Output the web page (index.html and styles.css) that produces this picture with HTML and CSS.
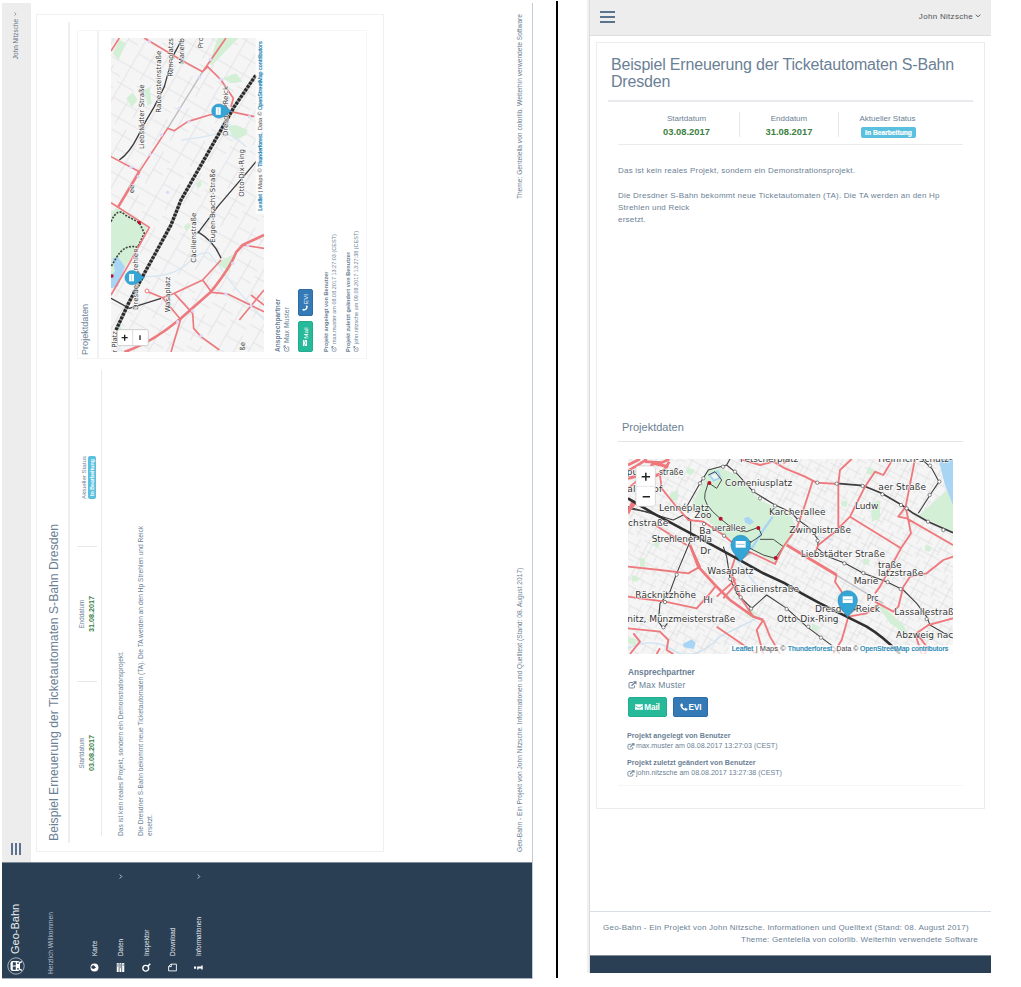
FILE: index.html
```html
<!DOCTYPE html>
<html lang="de">
<head>
<meta charset="utf-8">
<title>Geo-Bahn</title>
<link rel="stylesheet" href="styles.css">
</head>
<body>
<svg class="defs" width="0" height="0">
  <defs>
    <pattern id="streets" width="96" height="84" patternUnits="userSpaceOnUse" patternTransform="rotate(28)">
      <path d="M0 10H96M0 37H60M22 62H96M60 24H96M14 0V84M42 10V62M71 0V37M84 37V84M55 62V84M28 37V84M0 74H28" fill="none" stroke="#d6d6d6" stroke-width="1.6"/>
    </pattern>
    <pattern id="streets2" width="150" height="130" patternUnits="userSpaceOnUse" patternTransform="rotate(30)">
      <path d="M0 14H150M0 58H90M40 96H150M20 0V130M66 14V96M112 0V58M130 58V130M88 96V130" fill="none" stroke="#dfdfe1" stroke-width="2.2"/>
    </pattern>
    <symbol id="pin" viewBox="0 0 60 82" overflow="visible">
      <path d="M30 78L62 52L44 48Z" fill="#000" opacity=".3"/>
      <path d="M30 80C24 66 1 52 1 29A29 29 0 0 1 59 29C59 52 36 66 30 80Z" fill="#35a5d6" stroke="#2489bb" stroke-width="2"/>
      <path d="M15 17H45V37H15Z" fill="#fff"/><path d="M18 27H42" stroke="#8ccbe8" stroke-width="3"/>
    </symbol>
    <symbol id="edit" viewBox="0 0 18 16">
      <path d="M10 3H4Q2 3 2 5V12Q2 14 4 14H11Q13 14 13 12V9" fill="none" stroke="currentColor" stroke-width="1.9"/>
      <path d="M7 9.500L14 3" fill="none" stroke="currentColor" stroke-width="2.4"/><path d="M10 .5H17V7.500Z" fill="currentColor"/>
    </symbol>
    <symbol id="mail" viewBox="0 0 16 13">
      <path d="M0 1H16V3L8 8L0 3ZM0 4.6L8 9.6L16 4.6V12H0Z" fill="currentColor"/>
    </symbol>
    <symbol id="phone" viewBox="0 0 14 14">
      <path d="M3.5 .5L5.5 4.5L4 6Q5.5 9 8 10L9.7 8.5L13.5 10.5Q13 13.5 10.5 13.5Q2 12.5 .5 4Q.5 1.5 3.5 .5Z" fill="currentColor"/>
    </symbol>
    <symbol id="down" viewBox="0 0 10 7">
      <path d="M1 1L5 5L9 1" fill="none" stroke="currentColor" stroke-width="1.6"/>
    </symbol>
  </defs>
</svg>

<div class="desktop-frame">
<div class="desktop">
  <aside class="sidebar">
    <div class="brand">
      <svg class="logo" viewBox="0 0 18 18"><circle cx="9" cy="9" r="8.2" fill="none" stroke="#c6ced6" stroke-width=".8"/><rect x="4" y="3.500" width="10" height="9.500" rx="2.200" fill="#fff"/><path d="M5.800 12.500L4.600 15M12.200 12.500L13.400 15" stroke="#fff" stroke-width="1.300"/><path d="M5.300 5.800H8.400V8.800H5.300ZM9.600 5.800H12.700V8.800H9.600Z" fill="#2a3f54"/><circle cx="6.200" cy="11" r=".9" fill="#2a3f54"/><circle cx="11.800" cy="11" r=".9" fill="#2a3f54"/></svg>
      <span>Geo-Bahn</span>
    </div>
    <p class="welcome">Herzlich Willkommen</p>
    <nav class="menu">
      <a><svg viewBox="0 0 12 12"><circle cx="6" cy="6" r="5.3" fill="#fff"/><path d="M5 2Q9 1 9 5L6 8L4 5Z" fill="#2a3f54"/></svg><span>Karte</span></a>
      <a><svg viewBox="0 0 12 12"><path d="M0 1H12V3.6H0ZM0 4.6H12V7.2H0ZM0 8.2H12V11H0Z" fill="#fff"/><path d="M7 2.3H11M5 5.9H11M8 9.6H11" stroke="#7b8996"/></svg><span>Daten</span><svg class="chev"><use href="#down"/></svg></a>
      <a><svg viewBox="0 0 12 12"><circle cx="5" cy="5" r="3.9" fill="none" stroke="#fff" stroke-width="1.8"/><path d="M8 8L11 11" stroke="#fff" stroke-width="2.2"/></svg><span>Inspektor</span></a>
      <a><svg viewBox="0 0 12 12"><path d="M1.5 .8H7.5L10.5 4V11.2H1.5ZM7.2 1V4.4H10.5" fill="none" stroke="#fff" stroke-width="1.2"/></svg><span>Download</span></a>
      <a><svg viewBox="0 0 12 12"><path d="M4.5 0H7.5V2.8H4.5ZM3.5 4.2H7.5V9.7H8.7V11.6H3.3V9.7H4.6V6H3.5Z" fill="#fff"/></svg><span>Informationen</span><svg class="chev"><use href="#down"/></svg></a>
    </nav>
  </aside>
  <main class="main">
    <header class="topbar"><div class="burger"><i></i><i></i><i></i></div><div class="user">John Nitzsche <svg><use href="#down"/></svg></div></header>
    <section class="card">
      <h1>Beispiel Erneuerung der Ticketautomaten S-Bahn Dresden</h1>
      <div class="columns">
        <div class="left">
          <div class="stats">
            <div><span>Startdatum</span><b>03.08.2017</b></div>
            <div><span>Enddatum</span><b>31.08.2017</b></div>
            <div><span>Aktueller Status</span><em>In Bearbeitung</em></div>
          </div>
          <p class="desc">Das ist kein reales Projekt, sondern ein Demonstrationsprojekt.<br><br>Die Dresdner S-Bahn bekommt neue Ticketautomaten (TA). Die TA werden an den Hp Strehlen und Reick<br>ersetzt.</p>
        </div>
        <div class="panel">
          <h2>Projektdaten</h2>
          <svg class="map" viewBox="0 0 942 459">
            <rect width="942" height="459" fill="#f5f5f6"/><rect width="942" height="459" fill="url(#streets2)"/>
            <g transform="translate(1056 -330) rotate(90)" fill="none" stroke-linejoin="round">
              <g fill="#d3efd5">
                <path d="M330 635L350 625L440 680L400 760L330 865Z"/><path d="M645 790L703 760L685 815Z"/><path d="M625 190L650 114H712L632 197Z"/>
                <path d="M335 160L355 120L375 130L352 180ZM376 295L395 277L410 300L392 322ZM430 270L445 262L452 310L440 318ZM665 235L705 220L725 245L690 250ZM680 380L705 375L740 390L735 405L700 420ZM585 550L598 540L602 555L590 567ZM548 680L562 668L570 680L556 692ZM345 975L358 970L362 988L350 992Z"/>
              </g>
              <path d="M335 775L350 770L372 800L350 860L330 865V825L342 815Z" fill="#a9d5f4"/>
              <path d="M540 420Q620 410 650 400T735 440M430 830Q520 830 560 790T625 760L700 860L789 960" stroke="#d8e7f2" stroke-width="4"/>
              <path d="M500 385L605 215" stroke="#bdbdc0" stroke-width="4"/>
              <g stroke="#3c3c3c" stroke-width="4"><path d="M330 895L385 925L480 895M590 695Q640 725 660 775M590 700L650 620L740 515L765 485M355 480Q385 460 410 410T460 320L490 260L515 170L545 114"/></g>
              <path d="M330 665Q350 620 372 645L415 668L430 700L410 742Q370 730 345 775L330 800" stroke="#444" stroke-width="5" stroke-dasharray="6 4"/>
              <g stroke="#ec7a7e" stroke-width="5">
                <path d="M330 608L445 682L385 790L330 885M415 515L500 385L520 392L560 365L625 345L690 335L760 350M605 215L675 114M330 470L415 515M690 320L697 295L660 240L620 200L605 215L540 180L430 114M330 153L355 114"/>
                <path d="M725 735L789 745M510 1056L540 955M440 875L485 893L520 880L605 840L660 780M520 880L575 940L578 985L600 1010L655 1050M485 893L540 960M605 840L632 877L680 882L789 935M715 960L789 870M750 885L789 915"/>
              </g>
              <path d="M352 620L415 515M370 1056Q450 1030 540 955L630 875Q690 800 705 757L725 735L789 705" stroke="#ec7a7e" stroke-width="8"/>
              <path d="M345 990L385 905L430 820L510 675L540 600L620 460L700 320L765 225" stroke="#999" stroke-width="10"/>
              <path d="M345 990L385 905L430 820L510 675L540 600L620 460L700 320L765 225" stroke="#292929" stroke-width="10" stroke-dasharray="8 4"/>
              <circle cx="438" cy="873" r="6" fill="#fff" stroke="#ec7a7e" stroke-width="3"/>
              <g fill="#dcd8fa"><circle cx="390" cy="502" r="5"/><circle cx="412" cy="530" r="5"/><circle cx="447" cy="463" r="5"/><circle cx="482" cy="405" r="5"/><circle cx="535" cy="325" r="5"/><circle cx="595" cy="232" r="5"/><circle cx="628" cy="178" r="5"/><circle cx="540" cy="180" r="5"/><circle cx="445" cy="125" r="5"/><circle cx="564" cy="365" r="5"/><circle cx="660" cy="238" r="5"/><circle cx="745" cy="350" r="5"/><circle cx="500" cy="577" r="5"/><circle cx="530" cy="965" r="5"/><circle cx="575" cy="933" r="5"/><circle cx="695" cy="790" r="5"/><circle cx="740" cy="737" r="5"/><circle cx="675" cy="882" r="5"/><circle cx="750" cy="917" r="5"/><circle cx="600" cy="1007" r="5"/></g>
              <g fill="#b9122f"><circle cx="415" cy="668" r="5"/><circle cx="333" cy="828" r="5"/></g>
            </g>
            <g class="labels" font-size="21">
              <text x="609" y="100" textLength="194">Liebstädter Straße</text><text x="718" y="149" textLength="186">Rauensteinstraße</text>
              <text x="826" y="186" textLength="116">Rennplatzs</text><text x="864" y="219" textLength="78">Marienb</text><text x="911" y="277" textLength="34">Pro</text>
              <text x="476" y="70">ee</text><text x="648" y="350" textLength="150">Dresden-Reick</text><text x="126" y="82" textLength="185">Dresden-Strehlen</text>
              <text x="119" y="176" textLength="107">Wasaplatz</text><text x="268" y="256" textLength="150">Cäcilienstraße</text><text x="328" y="311" textLength="221">Eugen-Bracht-Straße</text>
              <text x="466" y="398" textLength="143">Otto-Dix-Ring</text><text x="-2" y="17" textLength="65">r Platz</text><text x="4" y="401">ße</text>
            </g>
            <use href="#pin" x="201" y="41" width="44" height="62"/><use href="#pin" x="701" y="301" width="44" height="62"/>
            <rect x="415" y="434" width="527" height="25" fill="#fff" opacity=".75"/>
            <g class="attr" font-size="14"><text x="424" y="452" textLength="49" lengthAdjust="spacingAndGlyphs" class="lk">Leaflet</text><text x="479" y="452" textLength="72" lengthAdjust="spacingAndGlyphs">| Maps ©</text><text x="556" y="452" textLength="98" lengthAdjust="spacingAndGlyphs" class="lk">Thunderforest</text><text x="655" y="452" textLength="66" lengthAdjust="spacingAndGlyphs">, Data ©</text><text x="726" y="452" textLength="206" lengthAdjust="spacingAndGlyphs" class="lk">OpenStreetMap contributors</text></g>
            <rect x="19" y="19" width="48" height="93" rx="5" fill="#fff" stroke="#bbb" stroke-width="2"/><path d="M20 65H66" stroke="#ccc" stroke-width="2"/><path d="M34 41H52M43 32V50M36 87H50" stroke="#222" stroke-width="4"/>
          </svg>
          <div class="contact"><b>Ansprechpartner</b><span><svg><use href="#edit"/></svg>Max Muster</span></div>
          <div class="buttons"><a class="green"><svg><use href="#mail"/></svg>Mail</a><a class="blue"><svg><use href="#phone"/></svg>EVI</a></div>
          <div class="log"><b>Projekt angelegt von Benutzer</b><span><svg><use href="#edit"/></svg>max.muster am 08.08.2017 13:27:03 (CEST)</span></div>
          <div class="log"><b>Projekt zuletzt geändert von Benutzer</b><span><svg><use href="#edit"/></svg>john.nitzsche am 09.08.2017 13:27:38 (CEST)</span></div>
        </div>
      </div>
    </section>
    <footer><span>Geo-Bahn - Ein Projekt von John Nitzsche. Informationen und Quelltext (Stand: 08. August 2017)</span><span>Theme: Gentelella von colorlib. Weiterhin verwendete Software</span></footer>
  </main>
</div>
</div>

<div class="separator"></div>

<div class="phone">
  <header class="topbar"><div class="burger"><i></i><i></i><i></i></div><div class="user">John Nitzsche <svg><use href="#down"/></svg></div></header>
  <section class="card">
    <h1>Beispiel Erneuerung der Ticketautomaten S-Bahn Dresden</h1>
    <div class="left">
      <div class="stats">
        <div><span>Startdatum</span><b>03.08.2017</b></div>
        <div><span>Enddatum</span><b>31.08.2017</b></div>
        <div><span>Aktueller Status</span><em>In Bearbeitung</em></div>
      </div>
      <p class="desc">Das ist kein reales Projekt, sondern ein Demonstrationsprojekt.<br><br>Die Dresdner S-Bahn bekommt neue Ticketautomaten (TA). Die TA werden an den Hp<br>Strehlen und Reick<br>ersetzt.</p>
    </div>
    <div class="panel">
      <h2>Projektdaten</h2>
      <svg class="map" viewBox="24 27 975 585">
        <rect x="24" y="27" width="975" height="585" fill="#f5f5f6"/><rect x="24" y="27" width="975" height="585" fill="url(#streets)"/>
        <g fill="#d3efd5">
          <path d="M262 60L300 55L345 72L415 148L505 190L533 235L500 285L465 338L310 255L215 165L250 95Z"/>
          <path d="M892 200L999 105V245L905 200Z"/><path d="M765 455L790 470L850 525L870 560L810 520Z"/><path d="M372 485L395 475L415 505L385 502Z"/>
          <path d="M755 160L780 150V205L755 215ZM665 155L682 150L680 172L665 168ZM60 325H75V350H60ZM35 375L60 385L50 395L35 390ZM150 130L175 120L172 150L150 155ZM730 325L750 330L745 345L728 342ZM105 270L120 280L115 295L100 285ZM24 560L50 568L45 585L24 580ZM200 52L225 60L215 75L200 70ZM575 520L600 530L590 545L575 538ZM915 285L935 290L930 305L915 302ZM745 50L765 60L755 75L740 70Z"/>
        </g>
        <g fill="#a9d5f4"><path d="M955 27H999V165L975 105Z"/><path d="M265 75L295 60L305 85L280 95Z"/><path d="M372 205L385 200L402 215L390 225L375 217Z"/><path d="M188 582L215 568L227 578L222 597L192 592Z"/></g>
        <path d="M272 76L292 68L298 82L282 88Z" fill="#eef6ee"/>
        <path d="M458 200L430 240L395 295L375 290" stroke="#a9d5f4" stroke-width="7" fill="none"/>
        <g fill="none" stroke="#cfe2f0" stroke-width="4"><path d="M24 595Q100 560 160 600T300 560L420 500M350 330L420 420M590 260L640 270"/></g>
        <path d="M640 370L790 460" stroke="#c4c4c6" stroke-width="4" fill="none"/>
        <g fill="none" stroke="#3d3d3d" stroke-width="3.2" stroke-linejoin="round">
          <path d="M24 170L75 185L160 210L190 195L212 210V270L170 370L150 425L120 460L115 515L130 535L142 520M200 170L240 100L265 60L320 45L330 27M320 45L350 70L400 125L465 165L510 185L535 210L570 235L595 270L592 295L625 320L675 340L730 370L800 395L850 420L890 460L920 500L930 525L999 565"/>
          <path d="M650 100L730 107L785 130L845 165L880 190L925 215L999 248" stroke-width="5"/>
          <path d="M905 27L935 55L957 95L930 135L895 190M330 385L350 430L395 475L440 435L500 475L560 530L640 590L660 612M310 290L320 320L330 385M24 175L105 190"/>
          <path d="M265 98L255 130Q245 160 300 205Q350 250 380 245L415 232L425 255L395 275L360 270M395 275L380 290L430 315L465 325L490 290L460 268H420M265 98L290 115L305 90L285 65L265 75" stroke-width="2.8"/>
        </g>
        <g fill="none" stroke="#ee787c" stroke-width="5.500" stroke-linejoin="round">
          <path d="M24 115L60 85L120 72M120 75L125 115L165 165L205 210L250 215L310 255L345 285L465 342L490 290L530 235L555 165L578 92M360 27L420 45L460 35L495 55L555 80L590 98L655 102L660 60L695 27M655 102V235M817 30L790 75L765 65L735 110L690 200L645 245L595 285L580 320M690 200L843 295M885 27L857 170L835 200L860 205L999 285M857 170L873 250L843 295L780 410L765 430"/>
          <path d="M999 320L970 330L920 370L870 380L850 410L835 470L820 485L765 455M650 375L645 395L665 425L675 490L685 500L665 570L640 612M685 500L740 490L775 465M24 440L60 445L135 455L230 475L270 430L290 405M24 350L120 360L205 370L240 350L210 285M350 310L330 370L345 390L290 440M340 385L360 440L400 500M310 445L345 405M430 510L450 560L480 612M430 510L410 540L430 612M24 535L120 545L145 570L140 600L160 612M30 612L60 575L40 550M290 530L410 612M110 612L120 595M490 40L510 27M999 505L925 525L890 550L920 590L915 612M885 550L905 612M105 225L200 285"/>
        </g>
        <path d="M24 62Q65 40 80 27M24 45L60 27M75 35L125 38L148 27M148 35L125 70L75 90M24 185L45 160M210 285L235 350L285 405L330 450L400 500L430 510" fill="none" stroke="#ee787c" stroke-width="8"/>
        <path d="M24 85Q80 75 100 40L145 50M24 190L40 150M500 285L650 375" fill="none" stroke="#ee787c" stroke-width="9"/>
        <path d="M24 145L100 190L240 265L350 325L430 370L495 400L545 430L600 460L680 500L740 530Q790 560 840 612" fill="none" stroke="#303030" stroke-width="8"/>
        <g fill="#fff" stroke="#555" stroke-width="2"><circle cx="240" cy="100" r="5"/><circle cx="250" cy="85" r="5"/><circle cx="309" cy="50" r="5"/><circle cx="345" cy="65" r="5"/><circle cx="400" cy="123" r="5"/><circle cx="420" cy="145" r="5"/><circle cx="465" cy="167" r="5"/><circle cx="535" cy="210" r="5"/><circle cx="593" cy="272" r="5"/><circle cx="673" cy="340" r="5"/><circle cx="730" cy="369" r="5"/><circle cx="803" cy="396" r="5"/><circle cx="842" cy="417" r="5"/><circle cx="592" cy="98" r="5"/><circle cx="650" cy="101" r="5"/><circle cx="728" cy="108" r="5"/><circle cx="787" cy="133" r="5"/><circle cx="843" cy="165" r="5"/><circle cx="860" cy="175" r="5"/><circle cx="924" cy="215" r="5"/><circle cx="970" cy="240" r="5"/><circle cx="958" cy="95" r="5"/><circle cx="929" cy="135" r="5"/><circle cx="930" cy="47" r="5"/><circle cx="170" cy="374" r="5"/><circle cx="135" cy="456" r="5"/><circle cx="130" cy="532" r="5"/><circle cx="331" cy="387" r="5"/><circle cx="362" cy="442" r="5"/><circle cx="393" cy="476" r="5"/><circle cx="500" cy="477" r="5"/><circle cx="565" cy="530" r="5"/><circle cx="603" cy="563" r="5"/><circle cx="252" cy="222" r="5"/><circle cx="312" cy="257" r="5"/><circle cx="920" cy="507" r="5"/></g>
        <g fill="#b9122f"><circle cx="268" cy="99" r="6"/><circle cx="302" cy="206" r="6"/><circle cx="415" cy="234" r="6"/><circle cx="467" cy="324" r="6"/></g>
        <g class="labels" font-size="27">
          <text x="360" y="36" textLength="175">Fetscherplatz</text><text x="775" y="36" textLength="222">Heinrich-Schütz-</text>
          <text x="20" y="75">pu</text><text x="117" y="75" textLength="73" lengthAdjust="spacingAndGlyphs">straße</text><text x="22" y="127">al</text><text x="100" y="127">of</text>
          <text x="315" y="108" textLength="202">Comeniusplatz</text><text x="117" y="182" textLength="151">Lennéplatz</text><text x="223" y="203" textLength="52">Zoo</text>
          <text x="24" y="227" textLength="121">chstraße</text><text x="238" y="252">Ba</text><text x="275" y="242" textLength="103" lengthAdjust="spacingAndGlyphs">uerallee</text><text x="95" y="276" textLength="181">Strehlener-Pla</text><text x="241" y="312">Dr</text>
          <text x="262" y="371" textLength="139">Wasaplatz</text><text x="342" y="425" textLength="195">Cäcilienstraße</text><text x="46" y="444" textLength="182">Räcknitzhöhe</text><text x="250" y="460">Hı</text>
          <text x="22" y="516" textLength="324">nitz, Münzmeisterstraße</text><text x="471" y="517" textLength="185">Otto-Dix-Ring</text><text x="447" y="194" textLength="170">Karcherallee</text><text x="508" y="250" textLength="185">Zwinglistraße</text>
          <text x="775" y="119" textLength="143">aer Straße</text><text x="705" y="176" textLength="70">Ludw</text><text x="542" y="322" textLength="253">Liebstädter Straße</text><text x="774" y="354" textLength="71">traße</text><text x="774" y="378" textLength="136">latzstraße</text>
          <text x="701" y="402" textLength="74">Marie</text><text x="740" y="452" textLength="36" lengthAdjust="spacingAndGlyphs">Prc</text><text x="585" y="485" textLength="195">Dresden-Reick</text><text x="823" y="495" textLength="178">Lassallestraß</text><text x="828" y="563" textLength="172">Abzweig nac</text>
        </g>
        <use href="#pin" x="332" y="256" width="60" height="82"/><use href="#pin" x="653" y="422" width="60" height="82"/>
        <rect x="330" y="585" width="669" height="27" fill="#fff" opacity=".75"/>
        <g class="attr" font-size="20"><text x="335" y="604" textLength="65" lengthAdjust="spacingAndGlyphs" class="lk">Leaflet</text><text x="407" y="604" textLength="90" lengthAdjust="spacingAndGlyphs">| Maps ©</text><text x="503" y="604" textLength="134" lengthAdjust="spacingAndGlyphs" class="lk">Thunderforest</text><text x="638" y="604" textLength="77" lengthAdjust="spacingAndGlyphs">, Data ©</text><text x="720" y="604" textLength="265" lengthAdjust="spacingAndGlyphs" class="lk">OpenStreetMap contributors</text></g>
        <rect x="48" y="48" width="58" height="121" rx="8" fill="#fff" stroke="#ccc" stroke-width="2"/><path d="M49 109H105" stroke="#ddd" stroke-width="2"/><path d="M65 80H90M77.500 68V92M68 140H90" stroke="#222" stroke-width="4.500"/>
      </svg>
      <div class="contact"><b>Ansprechpartner</b><span><svg><use href="#edit"/></svg>Max Muster</span></div>
      <div class="buttons"><a class="green"><svg><use href="#mail"/></svg>Mail</a><a class="blue"><svg><use href="#phone"/></svg>EVI</a></div>
      <div class="log"><b>Projekt angelegt von Benutzer</b><span><svg><use href="#edit"/></svg>max.muster am 08.08.2017 13:27:03 (CEST)</span></div>
      <div class="log"><b>Projekt zuletzt geändert von Benutzer</b><span><svg><use href="#edit"/></svg>john.nitzsche am 08.08.2017 13:27:38 (CEST)</span></div>
    </div>
  </section>
  <footer><span>Geo-Bahn - Ein Projekt von John Nitzsche. Informationen und Quelltext (Stand: 08. August 2017)</span><span>Theme: Gentelella von colorlib. Weiterhin verwendete Software</span></footer>
  <div class="base"></div>
</div>
</body>
</html>
```
FILE: styles.css
```css
* { box-sizing: border-box; }
body {
  margin: 0; width: 1021px; height: 987px; overflow: hidden; background: #fff;
  display: flex; align-items: flex-start; padding-left: 2px;
  font-family: "Liberation Sans", Arial, sans-serif; color: #6b7f95;
}
h1, h2, p { margin: 0; font-weight: 400; }
svg { flex: none; display: block; }
.defs { position: absolute; }
b, em, span { white-space: nowrap; }
.labels { font-family: "DejaVu Sans", sans-serif; fill: #333; stroke: #fff; stroke-width: 3px; paint-order: stroke; stroke-linejoin: round; }
.attr { font-family: "Liberation Sans", sans-serif; fill: #444; }
.attr .lk { fill: #0f80b0; stroke: #0f80b0; stroke-width: .5px; }
.topbar { display: flex; justify-content: space-between; background: #ededed; }
.user { display: flex; align-items: center; white-space: nowrap; }
.burger { display: flex; flex-direction: column; }
.burger i { background: #5a738e; }
.stats { display: grid; border-bottom: 1px solid #eaeaec; }
.stats div { display: flex; flex-direction: column; align-items: center; }
.stats div + div { border-left: 1px solid #e8e8ea; }
.stats b { color: #3c803f; }
.stats em { background: #5bc0de; color: #fff; font-style: normal; font-weight: 700; border-radius: 2px; }
.map { overflow: hidden; }
.contact, .log { display: flex; flex-direction: column; }
.contact span, .log span { display: flex; align-items: center; }
.buttons { display: flex; }
.buttons a { display: flex; align-items: center; justify-content: center; color: #fff; border-radius: 2px; font-weight: 700; }
.green { background: #26b99a; border: 1px solid #22ad90; }
.blue { background: #337ab7; border: 1px solid #2e6da4; }

/* desktop view, turned a quarter counter-clockwise */
.desktop-frame { width: 531px; height: 976px; margin-top: 3px; flex: none; }
.desktop {
  width: 976px; height: 531px; display: flex; border-bottom: 1px solid #c3ccd6;
  transform-origin: 0 0; transform: translateY(976px) rotate(-90deg);
  font-size: 6.63px;
}
.sidebar { width: 117px; height: 530px; background: #2a3f54; color: #e8ecf0; border-right: 1px solid #7f8c99; border-left: 1px solid #a9b2bb; }
.brand { display: flex; align-items: center; gap: 3px; padding: 4px 0 0 3px; font-size: 11px; line-height: 19px; }
.logo { width: 18px; height: 18px; }
.welcome { margin: 21px 0 0 4px; line-height: 10px; color: #b3bdc7; }
.menu { padding: 25.5px 20px 0 6px; }
.menu a { display: flex; align-items: center; height: 26.1px; font-size: 6.4px; }
.menu a > svg:first-child { width: 9px; height: 9px; margin-right: 7px; }
.menu .chev { margin-left: auto; margin-right: -9px; width: 5px; height: 4px; }
.main { width: 859px; }
.desktop .topbar { height: 29px; padding: 0 9px 0 7px; font-size: 6.4px; }
.desktop .burger { gap: 1.7px; padding-top: 8.6px; }
.desktop .burger i { width: 12px; height: 2.4px; }
.desktop .user { gap: 3px; color: #5f7187; margin-top: -3px; }
.desktop .user svg { width: 4px; height: 3px; }
.desktop .card { margin: 5px 0 0 10px; width: 838px; height: 348px; border: 1px solid #f0f0f2; padding-top: 9px; }
.desktop h1 { margin: 0 7px 0 8px; padding: 0 0 7px 2px; height: 24px; font-size: 12.2px; line-height: 16px; border-bottom: 2px solid #eeeff2; }
.columns { display: flex; padding-left: 15px; padding-top: 6.5px; }
.desktop .left { width: 466px; margin-right: 11px; }
.desktop .stats { grid-template-columns: 142px 135px 138px; padding: 0 0 5px 12px; height: 25.5px; }
.desktop .stats span { font-size: 6.3px; line-height: 9px; }
.desktop .stats b { font-size: 7.2px; line-height: 11px; }
.desktop .stats div { height: 20px; }
.desktop .stats div:last-child { padding-top: 3px; }
.desktop .stats div:last-child span { font-size: 6.14px; line-height: 8px; }
.desktop .stats em { font-size: 5.3px; line-height: 8.5px; padding: 0 3px; }
.desktop .desc { padding-top: 14px; line-height: 9.8px; white-space: nowrap; }
.desktop .panel { width: 329px; height: 290px; border: 1px solid #f5f5f7; padding: 1px 6px 0; }
.desktop h2 { font-size: 9.1px; line-height: 12px; padding: 0 0 6px 3px; margin: 0 -6px 12px; height: 20px; border-bottom: 2px solid #f0f1f4; }
.desktop .map { width: 314px; height: 153px; }
.desktop .contact { margin-top: 9px; font-size: 6.9px; line-height: 9.5px; }
.desktop .contact b { font-size: 6.6px; }
.desktop .contact svg { width: 7px; height: 7px; margin-right: 2px; }
.desktop .buttons { margin-top: 6px; gap: 5px; }
.desktop .buttons a { height: 15px; font-size: 6.2px; gap: 1px; font-weight: 400; }
.desktop .buttons svg { width: 6px; height: 6px; }
.desktop .green { width: 31px; }
.desktop .blue { width: 27px; }
.desktop .log { font-size: 5.5px; line-height: 8px; margin-top: 5.5px; }
.desktop .buttons + .log { margin-top: 9.5px; }
.desktop .log b { font-size: 5.6px; }
.desktop .log svg { width: 6px; height: 6px; margin-right: 2px; }
.desktop footer { display: flex; justify-content: space-between; margin: 130.5px 11px 0 10px; line-height: 10px; }

.separator { width: 2px; height: 977px; margin: 1px 0 0 23px; background: #000; flex: none; }

/* phone view */
.phone { margin-left: 29px; width: 404px; height: 973px; border-left: 2px solid #f0f0f0; font-size: 8px; letter-spacing: .22px; flex: none; box-shadow: inset 1px 0 #dcdcdc; padding-left: 1px; }
.phone .topbar { height: 36px; border-bottom: 1px solid #dedede; padding: 0 10px 0 10px; }
.phone .burger { gap: 2.5px; padding-top: 10.5px; }
.phone .burger i { width: 15px; height: 2.5px; }
.phone .user { gap: 2px; color: #4f5258; margin-top: -3px; letter-spacing: .3px; }
.phone .user svg { width: 6px; height: 4px; }
.phone .card { margin: 6px 0 0 6px; width: 389px; height: 767px; border: 1px solid #ececee; padding: 13px 11px 0; }
.phone h1 { font-size: 16px; line-height: 17px; letter-spacing: -.18px; padding: 0 0 10px 3px; width: 365px; height: 46px; border-bottom: 2px solid #e9eaed; }
.phone .left { margin: 10px 10px 0; width: 345px; height: 307px; }
.phone .stats { grid-template-columns: 105px 99px 100px; padding: 0 0 7px 16px; height: 33px; letter-spacing: 0; }
.phone .stats span { line-height: 13px; }
.phone .stats b { font-size: 9.4px; line-height: 14px; }
.phone .stats div { height: 25px; }
.phone .stats div:last-child { padding-right: 2px; }
.phone .stats em { font-size: 6.7px; line-height: 11px; height: 11px; padding: 0 4px; margin: 2px -2px 0 0; -webkit-text-stroke: .2px #fff; }
.phone .desc { padding-top: 20px; line-height: 12.3px; }
.phone .panel { width: 345px; height: 367px; margin-left: 10px; padding-left: 9px; border: solid #f6f6f7; border-width: 0 0 1px; }
.phone h2 { font-size: 11px; line-height: 16px; letter-spacing: 0; margin: 0 0 17px -9px; padding-left: 4px; height: 23px; width: 345px; border-bottom: 1px solid #e2e5e8; }
.phone .map { width: 325px; height: 195px; margin-left: 1px; }
.phone .contact { margin: 12px 0 0 1px; line-height: 12.7px; font-size: 8.5px; }
.phone .contact b { font-size: 8.3px; letter-spacing: 0; }
.phone .contact svg { width: 9px; height: 8px; margin-right: 2px; }
.phone .buttons { margin: 5.5px 0 0 1px; gap: 6px; }
.phone .buttons a { height: 20px; font-size: 8.2px; gap: 1px; letter-spacing: -.1px; padding-top: 1px; }
.phone .buttons svg { width: 8px; height: 8px; }
.phone .green { width: 39px; }
.phone .blue { width: 35px; }
.phone .log { font-size: 7.1px; line-height: 10px; letter-spacing: 0; margin-top: 7px; }
.phone .buttons + .log { margin-top: 14.5px; }
.phone .log b { font-size: 7.2px; }
.phone .log svg { width: 8px; height: 7px; margin-right: 1px; }
.phone footer { margin-top: 102px; height: 44px; border-top: 1px solid #d9dee4; padding: 10px 13px 0; display: flex; flex-direction: column; line-height: 12px; }
.phone footer span:first-child { letter-spacing: .24px; }
.phone footer span:last-child { align-self: flex-end; }
.base { height: 18px; background: #2a3f54; border-top: 1px solid #7f8c99; }
```
